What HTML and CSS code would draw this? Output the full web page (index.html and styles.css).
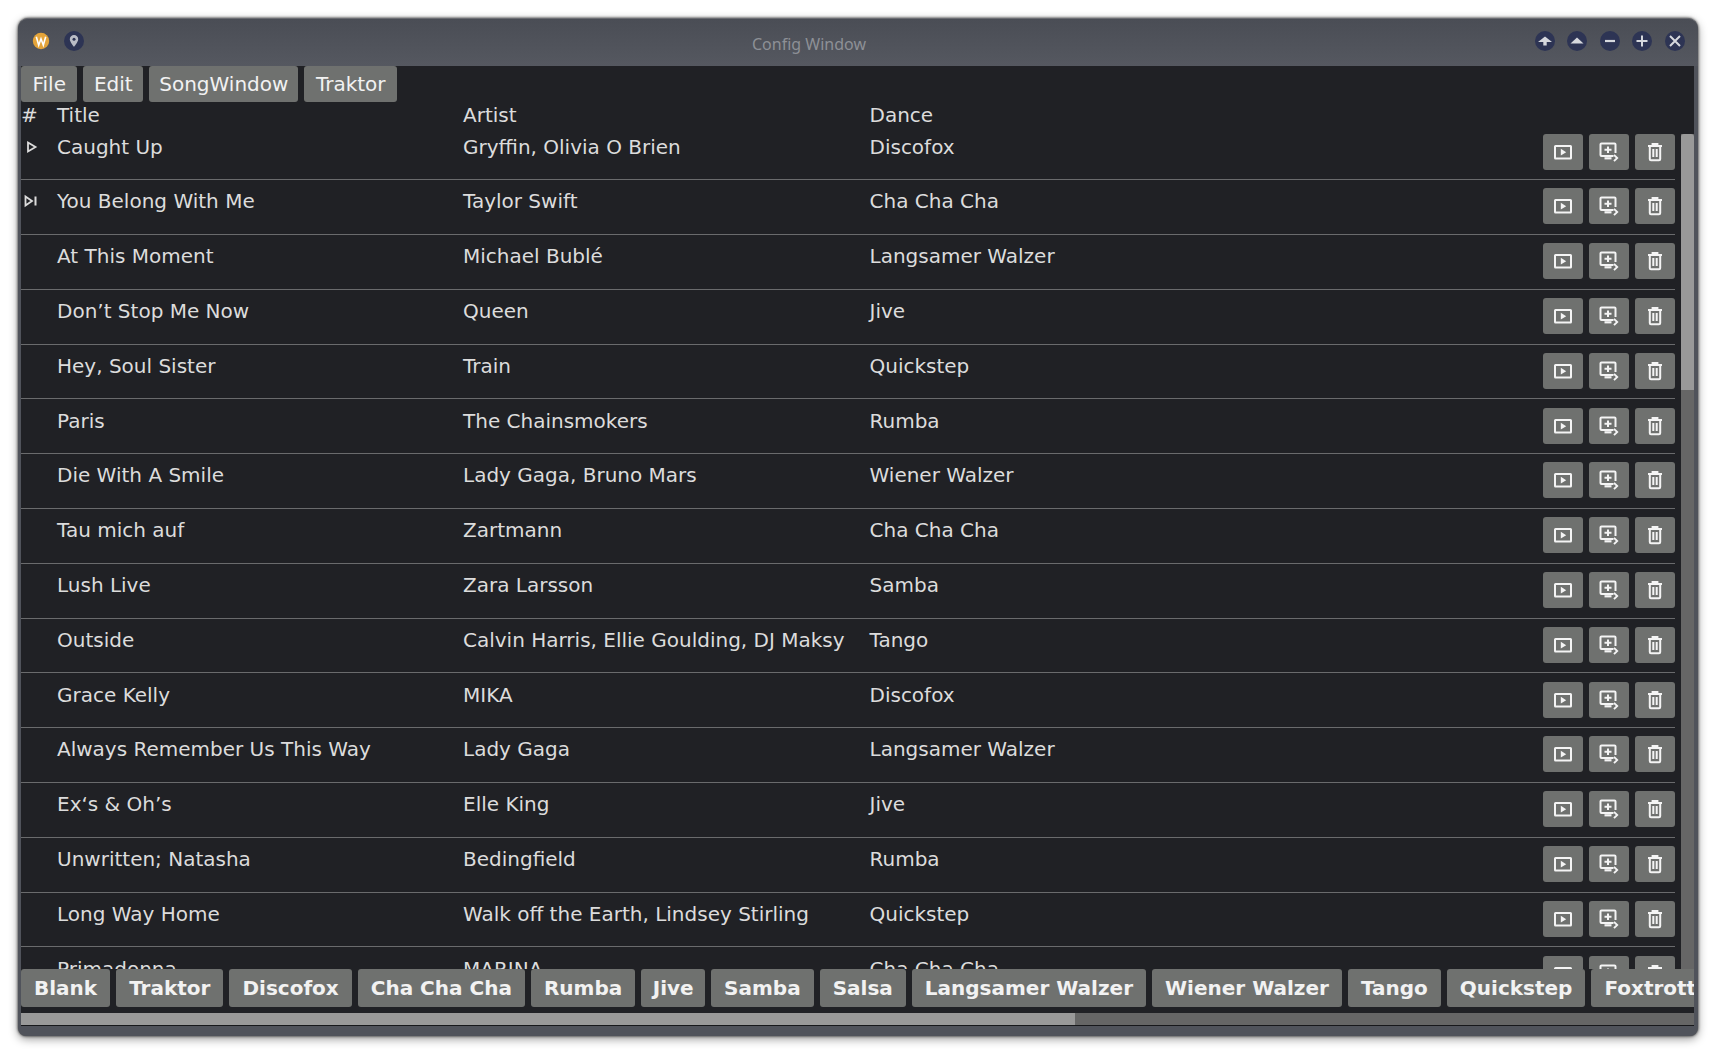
FILE: index.html
```html
<!DOCTYPE html>
<html lang="en">
<head>
    <meta charset="UTF-8">
    <meta name="viewport" content="width=device-width, initial-scale=1.0">
    <title>Config Window</title>
    <link rel="stylesheet" href="styles.css">
</head>
<body>
    <svg class="icon-defs" width="0" height="0">
        <symbol id="i-play" viewBox="0 0 20 20">
            <rect x="2" y="4" width="16" height="12.500" rx="0.500" fill="none" stroke="currentColor" stroke-width="2"/>
            <path d="M7.800 6.800l5.400 3.400-5.400 3.400z" fill="currentColor"/>
        </symbol>
        <symbol id="i-queue" viewBox="0 0 20 20">
            <path d="M14.500 14H2.500a1 1 0 0 1-1-1V2.500a1 1 0 0 1 1-1h13a1 1 0 0 1 1 1V11" fill="none" stroke="currentColor" stroke-width="2"/>
            <path d="M9 4.500v6.500M5.500 7.800h7" fill="none" stroke="currentColor" stroke-width="2"/>
            <path d="M5.500 16.300h7" fill="none" stroke="currentColor" stroke-width="2.200"/>
            <path d="M15 12.800l3.200 3.200-3.200 3.200" fill="none" stroke="currentColor" stroke-width="1.900"/>
        </symbol>
        <symbol id="i-trash" viewBox="0 0 20 20">
            <path d="M3 4h14M7.500 4V2h5v2" fill="none" stroke="currentColor" stroke-width="1.800"/>
            <path d="M4.800 4v13a1.200 1.200 0 0 0 1.200 1.200h8a1.200 1.200 0 0 0 1.200-1.200V4" fill="none" stroke="currentColor" stroke-width="2"/>
            <path d="M8.300 7v8M11.700 7v8" fill="none" stroke="currentColor" stroke-width="2"/>
        </symbol>
    </svg>

    <div class="window">
        <header class="titlebar">
            <div class="title-left">
                <span class="app-logo">
                    <svg width="18" height="18" viewBox="0 0 18 18"><circle cx="9" cy="9" r="8.200" fill="#e4a43a"/><path d="M4.300 4.800l2.400 8.400 2.300-6.400 2.300 6.400 2.400-8.400" fill="none" stroke="#fff" stroke-width="1.600"/></svg>
                </span>
                <span class="round-btn">
                    <svg width="12" height="14" viewBox="0 0 12 14"><path d="M6 1a4.200 4.200 0 0 0-4.200 4.200C1.800 8 6 12.800 6 12.800S10.200 8 10.200 5.200A4.200 4.200 0 0 0 6 1z" fill="#b9bcc6"/><circle cx="6" cy="5.200" r="1.500" fill="#2d3454"/></svg>
                </span>
            </div>
            <div class="title-text">Config Window</div>
            <div class="title-right">
                <span class="round-btn"><svg width="16" height="14" viewBox="0 0 16 14"><path d="M8 2.500l7 5.500H1z M6.300 8h3.400v3.500H6.300z" fill="#d6d8de"/></svg></span>
                <span class="round-btn"><svg width="16" height="14" viewBox="0 0 16 14"><path d="M8 3.500l6.500 6h-13z" fill="#d6d8de"/></svg></span>
                <span class="round-btn"><svg width="14" height="14" viewBox="0 0 14 14"><path d="M2 7h10" stroke="#d6d8de" stroke-width="2.200"/></svg></span>
                <span class="round-btn"><svg width="14" height="14" viewBox="0 0 14 14"><path d="M1.500 7h11M7 1.500v11" stroke="#d6d8de" stroke-width="2"/></svg></span>
                <span class="round-btn"><svg width="14" height="14" viewBox="0 0 14 14"><path d="M2 2l10 10M12 2L2 12" stroke="#d6d8de" stroke-width="2"/></svg></span>
            </div>
        </header>

        <div class="content">
            <nav class="menubar">
                <a href="#" class="menu-btn wide">File</a>
                <a href="#" class="menu-btn">Edit</a>
                <a href="#" class="menu-btn tight">SongWindow</a>
                <a href="#" class="menu-btn wide">Traktor</a>
            </nav>

            <div class="song-area">
                <div class="song-list">
                    <div class="song-head">
                        <span class="col-num">#</span>
                        <span class="col-title">Title</span>
                        <span class="col-artist">Artist</span>
                        <span class="col-dance">Dance</span>
                    </div>

                    <div class="song-row first">
                        <span class="col-num"><svg class="state-icon" width="14" height="14" viewBox="0 0 14 14"><path d="M4 2.500l7.500 4.500L4 11.500z" fill="none" stroke="currentColor" stroke-width="1.800"/></svg></span>
                        <span class="col-title">Caught Up</span>
                        <span class="col-artist">Gryffin, Olivia O Brien</span>
                        <span class="col-dance">Discofox</span>
                        <div class="row-actions">
                            <button class="icon-btn"><svg width="20" height="20"><use href="#i-play"/></svg></button>
                            <button class="icon-btn"><svg width="20" height="20"><use href="#i-queue"/></svg></button>
                            <button class="icon-btn"><svg width="20" height="20"><use href="#i-trash"/></svg></button>
                        </div>
                    </div>
                    <div class="song-row">
                        <span class="col-num"><svg class="state-icon" width="14" height="14" viewBox="0 0 14 14"><path d="M1.500 2.500l6.500 4.500-6.500 4.500z" fill="none" stroke="currentColor" stroke-width="1.800"/><path d="M11.500 2.500v9" stroke="currentColor" stroke-width="2"/></svg></span>
                        <span class="col-title">You Belong With Me</span>
                        <span class="col-artist">Taylor Swift</span>
                        <span class="col-dance">Cha Cha Cha</span>
                        <div class="row-actions">
                            <button class="icon-btn"><svg width="20" height="20"><use href="#i-play"/></svg></button>
                            <button class="icon-btn"><svg width="20" height="20"><use href="#i-queue"/></svg></button>
                            <button class="icon-btn"><svg width="20" height="20"><use href="#i-trash"/></svg></button>
                        </div>
                    </div>
                    <div class="song-row">
                        <span class="col-num"></span>
                        <span class="col-title">At This Moment</span>
                        <span class="col-artist">Michael Bublé</span>
                        <span class="col-dance">Langsamer Walzer</span>
                        <div class="row-actions">
                            <button class="icon-btn"><svg width="20" height="20"><use href="#i-play"/></svg></button>
                            <button class="icon-btn"><svg width="20" height="20"><use href="#i-queue"/></svg></button>
                            <button class="icon-btn"><svg width="20" height="20"><use href="#i-trash"/></svg></button>
                        </div>
                    </div>
                    <div class="song-row">
                        <span class="col-num"></span>
                        <span class="col-title">Don’t Stop Me Now</span>
                        <span class="col-artist">Queen</span>
                        <span class="col-dance">Jive</span>
                        <div class="row-actions">
                            <button class="icon-btn"><svg width="20" height="20"><use href="#i-play"/></svg></button>
                            <button class="icon-btn"><svg width="20" height="20"><use href="#i-queue"/></svg></button>
                            <button class="icon-btn"><svg width="20" height="20"><use href="#i-trash"/></svg></button>
                        </div>
                    </div>
                    <div class="song-row">
                        <span class="col-num"></span>
                        <span class="col-title">Hey, Soul Sister</span>
                        <span class="col-artist">Train</span>
                        <span class="col-dance">Quickstep</span>
                        <div class="row-actions">
                            <button class="icon-btn"><svg width="20" height="20"><use href="#i-play"/></svg></button>
                            <button class="icon-btn"><svg width="20" height="20"><use href="#i-queue"/></svg></button>
                            <button class="icon-btn"><svg width="20" height="20"><use href="#i-trash"/></svg></button>
                        </div>
                    </div>
                    <div class="song-row">
                        <span class="col-num"></span>
                        <span class="col-title">Paris</span>
                        <span class="col-artist">The Chainsmokers</span>
                        <span class="col-dance">Rumba</span>
                        <div class="row-actions">
                            <button class="icon-btn"><svg width="20" height="20"><use href="#i-play"/></svg></button>
                            <button class="icon-btn"><svg width="20" height="20"><use href="#i-queue"/></svg></button>
                            <button class="icon-btn"><svg width="20" height="20"><use href="#i-trash"/></svg></button>
                        </div>
                    </div>
                    <div class="song-row">
                        <span class="col-num"></span>
                        <span class="col-title">Die With A Smile</span>
                        <span class="col-artist">Lady Gaga, Bruno Mars</span>
                        <span class="col-dance">Wiener Walzer</span>
                        <div class="row-actions">
                            <button class="icon-btn"><svg width="20" height="20"><use href="#i-play"/></svg></button>
                            <button class="icon-btn"><svg width="20" height="20"><use href="#i-queue"/></svg></button>
                            <button class="icon-btn"><svg width="20" height="20"><use href="#i-trash"/></svg></button>
                        </div>
                    </div>
                    <div class="song-row">
                        <span class="col-num"></span>
                        <span class="col-title">Tau mich auf</span>
                        <span class="col-artist">Zartmann</span>
                        <span class="col-dance">Cha Cha Cha</span>
                        <div class="row-actions">
                            <button class="icon-btn"><svg width="20" height="20"><use href="#i-play"/></svg></button>
                            <button class="icon-btn"><svg width="20" height="20"><use href="#i-queue"/></svg></button>
                            <button class="icon-btn"><svg width="20" height="20"><use href="#i-trash"/></svg></button>
                        </div>
                    </div>
                    <div class="song-row">
                        <span class="col-num"></span>
                        <span class="col-title">Lush Live</span>
                        <span class="col-artist">Zara Larsson</span>
                        <span class="col-dance">Samba</span>
                        <div class="row-actions">
                            <button class="icon-btn"><svg width="20" height="20"><use href="#i-play"/></svg></button>
                            <button class="icon-btn"><svg width="20" height="20"><use href="#i-queue"/></svg></button>
                            <button class="icon-btn"><svg width="20" height="20"><use href="#i-trash"/></svg></button>
                        </div>
                    </div>
                    <div class="song-row">
                        <span class="col-num"></span>
                        <span class="col-title">Outside</span>
                        <span class="col-artist">Calvin Harris, Ellie Goulding, DJ Maksy</span>
                        <span class="col-dance">Tango</span>
                        <div class="row-actions">
                            <button class="icon-btn"><svg width="20" height="20"><use href="#i-play"/></svg></button>
                            <button class="icon-btn"><svg width="20" height="20"><use href="#i-queue"/></svg></button>
                            <button class="icon-btn"><svg width="20" height="20"><use href="#i-trash"/></svg></button>
                        </div>
                    </div>
                    <div class="song-row">
                        <span class="col-num"></span>
                        <span class="col-title">Grace Kelly</span>
                        <span class="col-artist">MIKA</span>
                        <span class="col-dance">Discofox</span>
                        <div class="row-actions">
                            <button class="icon-btn"><svg width="20" height="20"><use href="#i-play"/></svg></button>
                            <button class="icon-btn"><svg width="20" height="20"><use href="#i-queue"/></svg></button>
                            <button class="icon-btn"><svg width="20" height="20"><use href="#i-trash"/></svg></button>
                        </div>
                    </div>
                    <div class="song-row">
                        <span class="col-num"></span>
                        <span class="col-title">Always Remember Us This Way</span>
                        <span class="col-artist">Lady Gaga</span>
                        <span class="col-dance">Langsamer Walzer</span>
                        <div class="row-actions">
                            <button class="icon-btn"><svg width="20" height="20"><use href="#i-play"/></svg></button>
                            <button class="icon-btn"><svg width="20" height="20"><use href="#i-queue"/></svg></button>
                            <button class="icon-btn"><svg width="20" height="20"><use href="#i-trash"/></svg></button>
                        </div>
                    </div>
                    <div class="song-row">
                        <span class="col-num"></span>
                        <span class="col-title">Ex‘s &amp; Oh’s</span>
                        <span class="col-artist">Elle King</span>
                        <span class="col-dance">Jive</span>
                        <div class="row-actions">
                            <button class="icon-btn"><svg width="20" height="20"><use href="#i-play"/></svg></button>
                            <button class="icon-btn"><svg width="20" height="20"><use href="#i-queue"/></svg></button>
                            <button class="icon-btn"><svg width="20" height="20"><use href="#i-trash"/></svg></button>
                        </div>
                    </div>
                    <div class="song-row">
                        <span class="col-num"></span>
                        <span class="col-title">Unwritten; Natasha</span>
                        <span class="col-artist">Bedingfield</span>
                        <span class="col-dance">Rumba</span>
                        <div class="row-actions">
                            <button class="icon-btn"><svg width="20" height="20"><use href="#i-play"/></svg></button>
                            <button class="icon-btn"><svg width="20" height="20"><use href="#i-queue"/></svg></button>
                            <button class="icon-btn"><svg width="20" height="20"><use href="#i-trash"/></svg></button>
                        </div>
                    </div>
                    <div class="song-row">
                        <span class="col-num"></span>
                        <span class="col-title">Long Way Home</span>
                        <span class="col-artist">Walk off the Earth, Lindsey Stirling</span>
                        <span class="col-dance">Quickstep</span>
                        <div class="row-actions">
                            <button class="icon-btn"><svg width="20" height="20"><use href="#i-play"/></svg></button>
                            <button class="icon-btn"><svg width="20" height="20"><use href="#i-queue"/></svg></button>
                            <button class="icon-btn"><svg width="20" height="20"><use href="#i-trash"/></svg></button>
                        </div>
                    </div>
                    <div class="song-row">
                        <span class="col-num"></span>
                        <span class="col-title">Primadonna</span>
                        <span class="col-artist">MARINA</span>
                        <span class="col-dance">Cha Cha Cha</span>
                        <div class="row-actions">
                            <button class="icon-btn"><svg width="20" height="20"><use href="#i-play"/></svg></button>
                            <button class="icon-btn"><svg width="20" height="20"><use href="#i-queue"/></svg></button>
                            <button class="icon-btn"><svg width="20" height="20"><use href="#i-trash"/></svg></button>
                        </div>
                    </div>
                </div>

                <div class="v-scroll"><div class="v-thumb"></div></div>
            </div>

            <div class="dance-bar">
                <a href="#" class="dance-btn">Blank</a>
                <a href="#" class="dance-btn">Traktor</a>
                <a href="#" class="dance-btn">Discofox</a>
                <a href="#" class="dance-btn">Cha Cha Cha</a>
                <a href="#" class="dance-btn">Rumba</a>
                <a href="#" class="dance-btn tight">Jive</a>
                <a href="#" class="dance-btn">Samba</a>
                <a href="#" class="dance-btn">Salsa</a>
                <a href="#" class="dance-btn">Langsamer Walzer</a>
                <a href="#" class="dance-btn">Wiener Walzer</a>
                <a href="#" class="dance-btn">Tango</a>
                <a href="#" class="dance-btn">Quickstep</a>
                <a href="#" class="dance-btn">Foxtrott</a>
            </div>
            <div class="h-scroll"><div class="h-thumb"></div></div>
        </div>
    </div>
</body>
</html>
```

FILE: styles.css
```css
html, body {
    height: 100%;
}

body {
    font-family: 'DejaVu Sans', sans-serif;
    background-color: #fff;
    margin: 0;
    padding: 18px 17px 16px 18px;
    box-sizing: border-box;
    overflow: hidden;
}

.icon-defs {
    position: absolute;
}

.window {
    height: 100%;
    display: flex;
    flex-direction: column;
    background-color: #50535b;
    border-radius: 10px 10px 8px 8px;
    border-top: 1px solid #6a6c72;
    box-sizing: border-box;
    box-shadow: 0 0 3px rgba(0, 0, 0, 0.85), 0 3px 10px rgba(0, 0, 0, 0.4);
    padding: 0 4px 10px 3px;
}

/* title bar */
.titlebar {
    height: 47px;
    box-sizing: border-box;
    display: flex;
    align-items: center;
    justify-content: space-between;
    position: relative;
    flex: none;
    padding: 0 13px 4px 13px;
    margin: 0 -4px 0 -3px;
    background: linear-gradient(#4a4d55, #555860);
    border-radius: 10px 10px 0 0;
}

.title-left, .title-right {
    display: flex;
    align-items: center;
}

.title-left {
    gap: 13px;
}

.title-right {
    gap: 12.600px;
}

.title-text {
    position: absolute;
    left: 0;
    right: 0;
    text-align: center;
    font-family: 'Noto Sans', sans-serif;
    font-size: 16px;
    color: #8d9096;
    padding-right: 98px;
    padding-top: 6px;
}

.app-logo {
    width: 20px;
    height: 20px;
    display: flex;
    align-items: center;
    justify-content: center;
}

.round-btn {
    width: 20px;
    height: 20px;
    border-radius: 50%;
    background-color: #2d3454;
    display: flex;
    align-items: center;
    justify-content: center;
}

/* main area */
.content {
    flex: 1;
    min-height: 0;
    display: flex;
    flex-direction: column;
    background-color: #202125;
    color: #dcdcdc;
    font-size: 20px;
    overflow: hidden;
    border-bottom: 1px solid #17181b;
}

.menubar {
    display: flex;
    gap: 6px;
    flex: none;
}

.menu-btn {
    height: 36px;
    line-height: 36px;
    padding: 0 10.500px;
    background-color: #6f716f;
    border-radius: 3px;
    color: #f2f2f2;
    text-decoration: none;
}

.menu-btn.wide {
    padding: 0 11.500px;
}

.menu-btn.tight {
    padding: 0 10px;
}

.song-area {
    flex: 1;
    min-height: 0;
    display: flex;
    gap: 6px;
    overflow: hidden;
}

.song-list {
    flex: 1;
    min-width: 0;
}

.song-head, .song-row {
    display: flex;
    align-items: flex-start;
}

.song-head {
    height: 23px;
    line-height: 26px;
}

.song-row {
    height: 54.800px;
    box-sizing: border-box;
    border-top: 1.500px solid #6a6b6d;
    padding-top: 8.200px;
    line-height: 27px;
}

.song-row.first {
    height: 54.200px;
    border-top: none;
    padding-top: 9px;
    line-height: 26px;
}

.col-num {
    width: 36px;
    flex: none;
}

.col-title {
    width: 406px;
    flex: none;
}

.col-artist {
    width: 406.500px;
    flex: none;
}

.col-dance {
    flex: 1;
}

.state-icon {
    display: block;
    margin: 6px 0 0 3px;
}

.row-actions {
    display: flex;
    gap: 6px;
    flex: none;
}

.icon-btn {
    width: 40px;
    height: 36px;
    padding: 0;
    border: none;
    border-radius: 3px;
    background-color: #6f716f;
    color: #f4f4f4;
    display: flex;
    align-items: center;
    justify-content: center;
}

.v-scroll {
    width: 13px;
    flex: none;
    background-color: #666;
    margin-top: 32px;
}

.v-thumb {
    height: 256px;
    background-color: #999;
    border-radius: 3px 3px 0 0;
}

/* bottom buttons */
.dance-bar {
    display: flex;
    gap: 6px;
    flex: none;
    overflow: hidden;
    padding-bottom: 6px;
    background-color: #202125;
}

.dance-btn {
    height: 38px;
    line-height: 38px;
    padding: 0 13px;
    background-color: #6f716f;
    border-radius: 3px;
    color: #f2f2f2;
    font-weight: bold;
    text-decoration: none;
    white-space: nowrap;
    flex: none;
}

.dance-btn.tight {
    padding: 0 11.500px;
}

.h-scroll {
    height: 12px;
    flex: none;
    background-color: #666;
}

.h-thumb {
    width: 1054px;
    height: 100%;
    background-color: #999;
}
```
